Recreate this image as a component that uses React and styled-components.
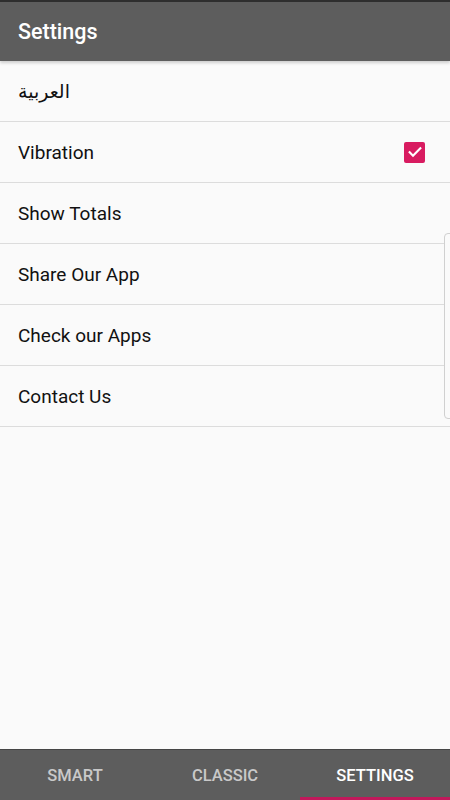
import styled, { createGlobalStyle } from "styled-components";

const Global = createGlobalStyle`
  html, body {
    margin: 0;
    padding: 0;
    background: #fafafa;
  }
  body {
    font-family: Roboto, "Noto Sans", "DejaVu Sans", sans-serif;
  }
`;

const Screen = styled.div`
  position: relative;
  width: 450px;
  height: 800px;
  display: flex;
  flex-direction: column;
  background: #fafafa;
  overflow: hidden;
`;

const Header = styled.header`
  height: 59px;
  border-top: 2px solid #2e2e2e;
  background: #5d5d5d;
  display: flex;
  align-items: center;
  padding: 0 18px;
  box-shadow: 0 2px 3px rgba(0, 0, 0, 0.18);
  z-index: 1;
`;

const Title = styled.h1`
  margin: 0;
  color: #ffffff;
  font-size: 21.5px;
  font-weight: 500;
`;

const List = styled.ul`
  flex: 1;
  margin: 0;
  padding: 0;
  list-style: none;
`;

const Row = styled.li`
  height: 60px;
  display: flex;
  align-items: center;
  justify-content: space-between;
  padding: 0 25px 0 18px;
  border-bottom: 1px solid #dcdcdc;
  font-size: 19px;
  color: #111111;
  font-family: ${(p) =>
    p.$rtl ? '"DejaVu Sans", "Noto Sans", sans-serif' : "inherit"};
`;

const Check = styled.span`
  width: 21px;
  height: 21px;
  border-radius: 2px;
  background: #d81b60;
  display: flex;
  align-items: center;
  justify-content: center;
`;

const EdgeHandle = styled.div`
  position: absolute;
  right: -6px;
  top: 233px;
  width: 10px;
  height: 184px;
  border: 1px solid #d0d0d0;
  border-radius: 4px;
  background: #fafafa;
`;

const TabBar = styled.nav`
  height: 50px;
  border-top: 1px solid #454545;
  background: #5d5d5d;
  display: grid;
  grid-template-columns: repeat(3, 1fr);
`;

const Tab = styled.div`
  position: relative;
  display: flex;
  align-items: center;
  justify-content: center;
  font-size: 16.5px;
  font-weight: 500;
  color: ${(p) => (p.$active ? "#ffffff" : "#c9c9c9")};

  &::after {
    content: "";
    position: absolute;
    left: 0;
    right: 0;
    bottom: 0;
    height: 3px;
    background: ${(p) => (p.$active ? "#c2185b" : "transparent")};
  }
`;

const items = [
  { label: "العربية", rtl: true },
  { label: "Vibration", checked: true },
  { label: "Show Totals" },
  { label: "Share Our App" },
  { label: "Check our Apps" },
  { label: "Contact Us" },
];

const tabs = ["SMART", "CLASSIC", "SETTINGS"];

export default function App() {
  return (
    <Screen>
      <Global />
      <Header>
        <Title>Settings</Title>
      </Header>
      <List>
        {items.map((it) => (
          <Row key={it.label} $rtl={it.rtl}>
            <span>{it.label}</span>
            {it.checked && (
              <Check>
                <svg width="16" height="16" viewBox="0 0 24 24">
                  <path
                    d="M4 12.5l5 5L20 6.5"
                    fill="none"
                    stroke="#fff"
                    strokeWidth="3.2"
                    strokeLinecap="square"
                  />
                </svg>
              </Check>
            )}
          </Row>
        ))}
      </List>
      <EdgeHandle />
      <TabBar>
        {tabs.map((t) => (
          <Tab key={t} $active={t === "SETTINGS"}>
            {t}
          </Tab>
        ))}
      </TabBar>
    </Screen>
  );
}
